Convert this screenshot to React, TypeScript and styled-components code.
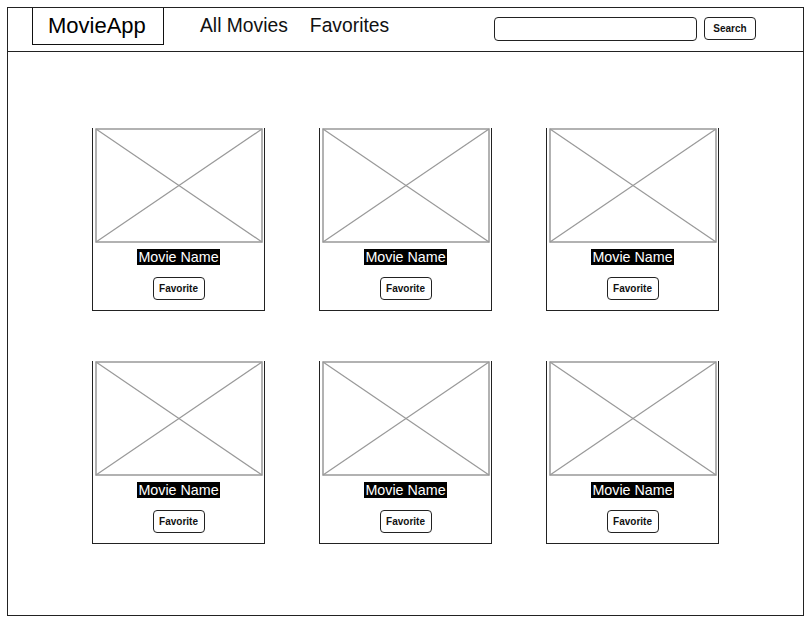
import React from "react";
import styled, { createGlobalStyle } from "styled-components";

const Global = createGlobalStyle`
  html, body { margin: 0; padding: 0; background: #fff; }
  body { font-family: "Liberation Sans", Arial, sans-serif; color: #000; }
  * { box-sizing: border-box; }
`;

const Frame = styled.div`
  margin: 7px 0 0 7px;
  width: 797px;
  height: 609px;
  border: 1px solid #222;
  display: flex;
  flex-direction: column;
`;

const Header = styled.header`
  height: 44px;
  border-bottom: 1px solid #222;
  display: flex;
  align-items: flex-start;
  padding-left: 24px;
`;

const Logo = styled.div`
  width: 132px;
  height: 37px;
  border: 1.5px solid #111;
  border-top: none;
  font-size: 22px;
  line-height: 36px;
  padding-left: 15px;
`;

const Nav = styled.nav`
  display: flex;
  gap: 22px;
  margin-left: 36px;
  margin-top: 7px;
  font-size: 19.3px;
  line-height: 22px;
`;

const NavLink = styled.span`
  color: #111;
`;

const Search = styled.div`
  margin-left: auto;
  margin-right: 47px;
  margin-top: 9px;
  display: flex;
  gap: 7px;
`;

const SearchInput = styled.div`
  width: 203px;
  height: 24px;
  border: 1.5px solid #222;
  border-radius: 4px;
`;

const SmallButton = styled.div`
  width: 52px;
  height: 23px;
  border: 1.5px solid #222;
  border-radius: 4px;
  display: flex;
  align-items: center;
  justify-content: center;
  font-size: 10px;
  font-weight: bold;
  color: #111;
`;

const Grid = styled.main`
  display: grid;
  grid-template-columns: repeat(3, 173px);
  column-gap: 54px;
  row-gap: 50px;
  padding: 76px 0 0 84px;
`;

const Card = styled.div`
  width: 173px;
  height: 183px;
  border: 1.5px solid #222;
  border-top: none;
  display: flex;
  flex-direction: column;
  align-items: center;
`;

const Picture = styled.svg`
  display: block;
  margin-left: 1px;
`;

const Label = styled.span`
  margin-top: 6px;
  background: #000;
  color: #fff;
  font-size: 14.3px;
  line-height: 16px;
  padding: 0 1px;
`;

const FavButton = styled(SmallButton)`
  margin-top: 12px;
`;

const Placeholder = () => (
  <Picture width="168" height="115" viewBox="0 0 168 115">
    <rect x="1" y="1" width="166" height="113" fill="none" stroke="#999" strokeWidth="1.5" />
    <line x1="1" y1="1" x2="167" y2="114" stroke="#999" strokeWidth="1.2" />
    <line x1="167" y1="1" x2="1" y2="114" stroke="#999" strokeWidth="1.2" />
  </Picture>
);

export default function App() {
  const movies = Array.from({ length: 6 }, (_, i) => i);
  return (
    <>
      <Global />
      <Frame>
        <Header>
          <Logo>MovieApp</Logo>
          <Nav>
            <NavLink>All Movies</NavLink>
            <NavLink>Favorites</NavLink>
          </Nav>
          <Search>
            <SearchInput />
            <SmallButton>Search</SmallButton>
          </Search>
        </Header>
        <Grid>
          {movies.map((m) => (
            <Card key={m}>
              <Placeholder />
              <Label>Movie Name</Label>
              <FavButton>Favorite</FavButton>
            </Card>
          ))}
        </Grid>
      </Frame>
    </>
  );
}
